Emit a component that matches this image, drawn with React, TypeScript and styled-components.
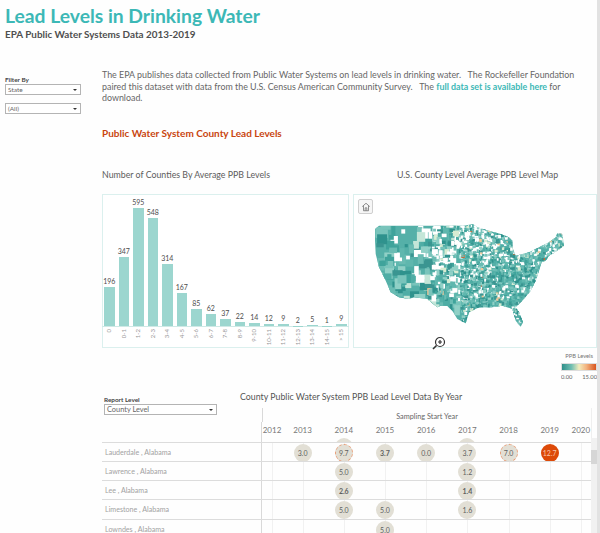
import React, { useMemo } from "react";
import styled, { createGlobalStyle } from "styled-components";

const Global = createGlobalStyle`
  html, body { margin: 0; padding: 0; background: #fefefe; }
  body { font-family: "Lato", "Noto Sans", sans-serif; color: #555; }
`;

const Page = styled.div`
  position: relative;
  width: 600px;
  height: 533px;
  overflow: hidden;
  background: #fefefe;
  border-right: 3px solid #e2e2e2;
  box-sizing: border-box;
`;
const Header = styled.header`
  padding: 0 0 0 5px;
  height: 64px;
`;
const Title = styled.h1`
  margin: 0;
  font-size: 19.3px;
  line-height: 31px;
  font-weight: 700;
  color: #3cb8b6;
  white-space: nowrap;
`;
const Subtitle = styled.h2`
  margin: -2px 0 0;
  font-size: 9.9px;
  line-height: 11px;
  font-weight: 700;
  color: #4f4f4f;
  white-space: nowrap;
`;
const Intro = styled.section`
  display: grid;
  grid-template-columns: 102px 476px;
  height: 59px;
`;
const Sidebar = styled.aside`
  padding: 11px 0 0 5px;
  display: flex;
  flex-direction: column;
`;
const FilterLabel = styled.label`
  font-size: 6.4px;
  line-height: 9px;
  font-weight: 700;
  color: #444;
  white-space: nowrap;
`;
const Select = styled.div<{ $w: number; $mt?: number; $fs?: number }>`
  width: ${(p) => p.$w}px;
  height: 11px;
  margin-top: ${(p) => p.$mt ?? 0}px;
  box-sizing: border-box;
  border: 1px solid #b4b4b4;
  background: #fff;
  display: flex;
  align-items: center;
  justify-content: space-between;
  padding: 0 3px 0 2px;
  font-size: ${(p) => p.$fs ?? 6.5}px;
  color: #666;
  &::after {
    content: "";
    border-left: 2px solid transparent;
    border-right: 2px solid transparent;
    border-top: 2.5px solid #333;
  }
`;
const Paragraph = styled.p`
  margin: 5px 0 0;
  font-size: 8.9px;
  line-height: 11.5px;
  color: #666;
  white-space: nowrap;
`;
const DataLink = styled.span`
  font-weight: 700;
  color: #3cb8b6;
`;
const SectionHeading = styled.h3`
  margin: 0 0 0 102px;
  height: 44px;
  padding-top: 3px;
  box-sizing: border-box;
  font-size: 10px;
  line-height: 14px;
  font-weight: 700;
  color: #c9450f;
  white-space: nowrap;
`;
const ChartTitles = styled.div`
  display: flex;
  padding-left: 102px;
  height: 27px;
`;
const ChartTitle = styled.div<{ $w: number }>`
  width: ${(p) => p.$w}px;
  font-size: 8.8px;
  line-height: 16px;
  color: #5c5c5c;
  white-space: nowrap;
`;
const Panels = styled.div`
  display: flex;
  gap: 4px;
  padding-left: 102px;
  height: 154px;
`;
const Panel = styled.div<{ $w: number }>`
  position: relative;
  width: ${(p) => p.$w}px;
  height: 100%;
  box-sizing: border-box;
  border: 1px solid #dbf0ee;
  background: #fff;
`;
const BarChart = styled.div`
  display: grid;
  grid-template-columns: repeat(17, 14.5px);
  margin-left: -1px;
  height: 100%;
  grid-template-rows: 132px 1fr;
`;
const BarCol = styled.div`
  display: flex;
  flex-direction: column;
  justify-content: flex-end;
  align-items: center;
  border-bottom: 1px solid #cfe9e6;
`;
const BarValue = styled.span`
  font-size: 7px;
  line-height: 9px;
  color: #4d4d4d;
  margin-bottom: 1px;
`;
const Bar = styled.div<{ $h: number }>`
  width: 10.5px;
  height: ${(p) => p.$h}px;
  background: #9cd6cf;
`;
const BarLabel = styled.div`
  display: flex;
  justify-content: center;
  align-items: flex-start;
  padding-top: 2px;
  font-size: 6px;
  line-height: 8px;
  color: #999;
  white-space: nowrap;
  & > span {
    writing-mode: vertical-rl;
    transform: rotate(180deg);
  }
`;
const HomeButton = styled.div`
  position: absolute;
  left: 4px;
  top: 4px;
  width: 15px;
  height: 15px;
  box-sizing: border-box;
  border: 1px solid #cfcfcf;
  border-radius: 2px;
  background: #f6f6f6;
  display: flex;
  align-items: center;
  justify-content: center;
`;
const MapSvg = styled.svg`
  position: absolute;
  left: 21px;
  top: 29px;
`;
const ZoomCursor = styled.svg`
  position: absolute;
  left: 78px;
  top: 141px;
`;
const LegendRow = styled.div`
  display: flex;
  flex-direction: column;
  align-items: flex-end;
  height: 42px;
`;
const LegendTitle = styled.div`
  margin-top: 3px;
  font-size: 5.8px;
  line-height: 9px;
  color: #777;
  padding-right: 4px;
`;
const Ramp = styled.div`
  width: 36px;
  height: 8px;
  margin-top: 3px;
  border: 1px solid #ddd;
  box-sizing: border-box;
  background: linear-gradient(90deg, #2f8f8a 0%, #72bfb2 28%, #f3ecbc 50%, #f2b27f 72%, #d9541e 100%);
`;
const RampLabels = styled.div`
  width: 36px;
  height: 7px;
  overflow: hidden;
  margin-top: 1px;
  display: flex;
  justify-content: space-between;
  font-size: 5.8px;
  line-height: 9px;
  color: #666;
  white-space: nowrap;
`;
const Report = styled.section`
  display: flex;
  flex-direction: column;
`;
const ReportTop = styled.div`
  display: flex;
  height: 18px;
  padding-left: 104px;
`;
const ReportControls = styled.div`
  width: 136px;
  margin-top: 5px;
  display: flex;
  flex-direction: column;
`;
const ReportTitle = styled.div`
  font-size: 8.8px;
  line-height: 14px;
  color: #555;
  white-space: nowrap;
`;
const AxisTitle = styled.div`
  margin-left: 262px;
  width: 330px;
  height: 14px;
  padding-top: 4px;
  box-sizing: border-box;
  border-left: 1px solid #d9d9d9;
  border-right: 1px solid #efefef;
  text-align: center;
  font-size: 7.3px;
  line-height: 10px;
  color: #666;
`;
const Row = styled.div<{ $head?: boolean }>`
  display: grid;
  grid-template-columns: 160px 20px repeat(7, 41.2px) 21px;
  margin-left: 102px;
  width: 490px;
  height: ${(p) => (p.$head ? 20.5 : 19.3)}px;
  box-sizing: border-box;
  border-bottom: 1px solid #dcdcdc;
  border-right: 1px solid #efefef;
  overflow: hidden;
`;
const County = styled.div`
  font-size: 7.1px;
  line-height: 20px;
  padding-left: 3px;
  color: #a2a2a2;
  white-space: nowrap;
  border-right: 1px solid #d9d9d9;
`;
const YearHead = styled.div`
  position: relative;
  text-align: center;
  font-size: 8px;
  line-height: 16px;
  color: #777;
`;
const Sliver = styled.span`
  position: absolute;
  left: 50%;
  bottom: -14px;
  width: 18px;
  height: 18px;
  margin-left: -9px;
  border-radius: 50%;
  background: #e2dfd5;
`;
const Cell = styled.div`
  position: relative;
  display: flex;
  align-items: center;
  justify-content: center;
  &::before {
    content: "";
    position: absolute;
    left: 50%;
    top: 0;
    bottom: 0;
    width: 1px;
    background: #f1f1f1;
  }
`;
const Dot = styled.div<{ $tone: "plain" | "ring" | "hot"; $bold?: boolean }>`
  position: relative;
  width: 18px;
  height: 18px;
  box-sizing: border-box;
  border-radius: 50%;
  display: flex;
  align-items: center;
  justify-content: center;
  font-size: 7px;
  font-weight: ${(p) => (p.$bold ? 700 : 400)};
  color: ${(p) => (p.$tone === "hot" ? "#f6c9ae" : "#5f5f5f")};
  background: ${(p) => (p.$tone === "hot" ? "#dd4a08" : "#e2dfd5")};
  border: ${(p) => (p.$tone === "ring" ? "1px dashed #e89a72" : "none")};
`;
const ScrollTrack = styled.div`
  position: absolute;
  right: 0;
  top: 438px;
  bottom: 0;
  width: 6px;
  background: #f1f1f1;
  &::after {
    content: "";
    position: absolute;
    left: 0;
    right: 0;
    top: 12px;
    height: 14px;
    background: #d6d6d6;
  }
`;

const bars: [string, number][] = [
  ["0", 196], ["0-1", 347], ["1-2", 595], ["2-3", 548], ["3-4", 314], ["4-5", 167],
  ["5-6", 85], ["6-7", 62], ["7-8", 37], ["8-9", 22], ["9-10", 14], ["10-11", 12],
  ["11-12", 9], ["12-13", 2], ["13-14", 5], ["14-15", 1], ["> 15", 9],
];

const years = [2012, 2013, 2014, 2015, 2016, 2017, 2018, 2019, 2020];

type DotData = { v: string; tone?: "plain" | "ring" | "hot"; bold?: boolean };
const rows: { name: string; data: Record<number, DotData> }[] = [
  { name: "Lauderdale , Alabama", data: {
    2013: { v: "3.0" }, 2014: { v: "9.7", tone: "ring" }, 2015: { v: "3.7", bold: true },
    2016: { v: "0.0" }, 2017: { v: "3.7" }, 2018: { v: "7.0", tone: "ring" }, 2019: { v: "12.7", tone: "hot" } } },
  { name: "Lawrence , Alabama", data: { 2014: { v: "5.0" }, 2017: { v: "1.2" } } },
  { name: "Lee , Alabama", data: { 2014: { v: "2.6", bold: true }, 2017: { v: "1.4", bold: true } } },
  { name: "Limestone , Alabama", data: { 2014: { v: "5.0" }, 2015: { v: "5.0" }, 2017: { v: "1.6" } } },
  { name: "Lowndes , Alabama", data: { 2015: { v: "5.0" } } },
];

const outline: [number, number][] = [
  [78,115],[90,105],[160,105],[230,105],[300,105],[345,105],[372,100],[385,110],[420,120],[455,130],[480,140],
  [490,150],[490,170],[500,195],[540,185],[570,170],[600,155],[620,140],[625,128],[640,130],[645,165],[625,180],
  [600,195],[590,210],[578,215],[570,240],[560,270],[545,300],[520,330],[500,350],[510,365],[522,395],[515,408],
  [500,390],[490,355],[460,345],[430,350],[390,350],[360,365],[350,398],[325,385],[310,360],[295,345],[275,345],
  [265,350],[235,325],[195,320],[180,325],[150,320],[125,305],[110,270],[90,230],[80,190],[78,150],
];
const toMap = ([x, y]: [number, number]) => `${((x - 78) / 3).toFixed(1)},${((y - 100) / 3).toFixed(1)}`;

function mulberry(seed: number) {
  return () => {
    seed |= 0; seed = (seed + 0x6d2b79f5) | 0;
    let t = Math.imul(seed ^ (seed >>> 15), 1 | seed);
    t = (t + Math.imul(t ^ (t >>> 7), 61 | t)) ^ t;
    return ((t ^ (t >>> 14)) >>> 0) / 4294967296;
  };
}
const teal = ["#3fa39b", "#4fada5", "#5fb7ae", "#79c4bb", "#3a9591", "#90d0c6", "#2f928d", "#6abcb3"];

function UsMap() {
  const cells = useMemo(() => {
    const r = mulberry(7);
    const out: { x: number; y: number; w: number; h: number; c: string }[] = [];
    const tealPick = () => teal[Math.floor(r() * teal.length)];
    // West: large overlapping counties, with pale and white gaps.
    for (let i = 0; i < 230; i++) {
      const x = r() * 95;
      const y = r() * 85;
      const w = 3 + r() * 9;
      const h = 3 + r() * 8;
      const roll = r();
      const inland = x > 18 && y < 58;
      let c = tealPick();
      if (roll < (inland ? 0.2 : 0.03)) c = "#ffffff";
      else if (roll < (inland ? 0.24 : 0.08)) c = "#c4e6d8";
      else if (roll < (inland ? 0.255 : 0.09)) c = "#efc79a";
      out.push({ x, y, w, h, c });
    }
    // Plains: many gaps, small counties.
    for (let i = 0; i < 240; i++) {
      const x = 55 + r() * 55;
      const y = r() * 75;
      const roll = r();
      const c = roll < 0.45 ? "#ffffff" : roll < 0.52 ? "#d7ecd2" : tealPick();
      out.push({ x, y, w: 2 + r() * 4, h: 2 + r() * 4, c });
    }
    // East: a fine texture of small counties with white specks.
    for (let i = 0; i < 3000; i++) {
      const x = 85 + r() * 107;
      const y = r() * 104;
      const roll = r();
      const north = y < 40;
      let c = tealPick();
      if (roll < (north ? 0.28 : 0.14)) c = "#ffffff";
      else if (roll < (north ? 0.33 : 0.17)) c = "#d7ecd2";
      else if (roll < (north ? 0.35 : 0.18)) c = "#efc79a";
      else if (roll < (north ? 0.356 : 0.184)) c = "#d9602a";
      out.push({ x, y, w: 1.5 + r() * 2, h: 1.5 + r() * 2, c });
    }
    return out;
  }, []);
  return (
    <MapSvg width="192" height="104" viewBox="0 0 192 104">
      <defs>
        <clipPath id="us">
          <polygon points={outline.map(toMap).join(" ")} />
        </clipPath>
      </defs>
      <g clipPath="url(#us)">
        <rect x="0" y="0" width="192" height="104" fill="#55b0a8" />
        {cells.map((c, i) => (
          <rect key={i} x={c.x.toFixed(1)} y={c.y.toFixed(1)} width={c.w.toFixed(1)} height={c.h.toFixed(1)} fill={c.c} />
        ))}
      </g>
    </MapSvg>
  );
}

export default function App() {
  return (
    <>
      <Global />
      <Page>
        <Header>
          <Title>Lead Levels in Drinking Water</Title>
          <Subtitle>EPA Public Water Systems Data 2013-2019</Subtitle>
        </Header>
        <Intro>
          <Sidebar>
            <FilterLabel>Filter By</FilterLabel>
            <Select $w={76}>State</Select>
            <Select $w={76} $mt={8}>(All)</Select>
          </Sidebar>
          <Paragraph>
            The EPA publishes data collected from Public Water Systems on lead levels in drinking water. &nbsp; The Rockefeller Foundation
            <br />
            paired this dataset with data from the U.S. Census American Community Survey. &nbsp; The <DataLink>full data set is available here</DataLink> for
            <br />
            download.
          </Paragraph>
        </Intro>
        <SectionHeading>Public Water System County Lead Levels</SectionHeading>
        <ChartTitles>
          <ChartTitle $w={295}>Number of Counties By Average PPB Levels</ChartTitle>
          <ChartTitle $w={170}>U.S. County Level Average PPB Level Map</ChartTitle>
        </ChartTitles>
        <Panels>
          <Panel $w={247}>
            <BarChart>
              {bars.map(([l, v]) => (
                <BarCol key={l}>
                  <BarValue>{v}</BarValue>
                  <Bar $h={v * 0.198} />
                </BarCol>
              ))}
              {bars.map(([l]) => (
                <BarLabel key={l}><span>{l}</span></BarLabel>
              ))}
            </BarChart>
          </Panel>
          <Panel $w={244}>
            <HomeButton>
              <svg width="10" height="10" viewBox="0 0 24 24" fill="none" stroke="#777" strokeWidth="2">
                <path d="M3 11 L12 3 L21 11 M6 9 V21 H18 V9 M10 21 V14 H14 V21" />
              </svg>
            </HomeButton>
            <UsMap />
            <ZoomCursor width="14" height="14" viewBox="0 0 14 14" fill="none" stroke="#333">
              <circle cx="8" cy="6" r="4.5" strokeWidth="1.2" />
              <path d="M8 4 V8 M6 6 H10" strokeWidth="1.2" />
              <path d="M4.5 9.5 L1 13" strokeWidth="1.6" />
            </ZoomCursor>
          </Panel>
        </Panels>
        <LegendRow>
          <LegendTitle>PPB Levels</LegendTitle>
          <Ramp />
          <RampLabels><span>0.00</span><span>15.00</span></RampLabels>
        </LegendRow>
        <Report>
          <ReportTop>
            <ReportControls>
              <FilterLabel>Report Level</FilterLabel>
              <Select $w={113} $fs={7.4}>County Level</Select>
            </ReportControls>
            <ReportTitle>County Public Water System PPB Lead Level Data By Year</ReportTitle>
          </ReportTop>
          <AxisTitle>Sampling Start Year</AxisTitle>
          <Row $head>
            <County />
            {years.map((y) => (
              <YearHead key={y}>
                {y}
                {(y === 2014 || y === 2017) && <Sliver />}
              </YearHead>
            ))}
          </Row>
          {rows.map((row) => (
            <Row key={row.name}>
              <County>{row.name}</County>
              {years.map((y) => {
                const d = row.data[y];
                return (
                  <Cell key={y}>
                    {d && <Dot $tone={d.tone ?? "plain"} $bold={d.bold}>{d.v}</Dot>}
                  </Cell>
                );
              })}
            </Row>
          ))}
        </Report>
        <ScrollTrack />
      </Page>
    </>
  );
}
